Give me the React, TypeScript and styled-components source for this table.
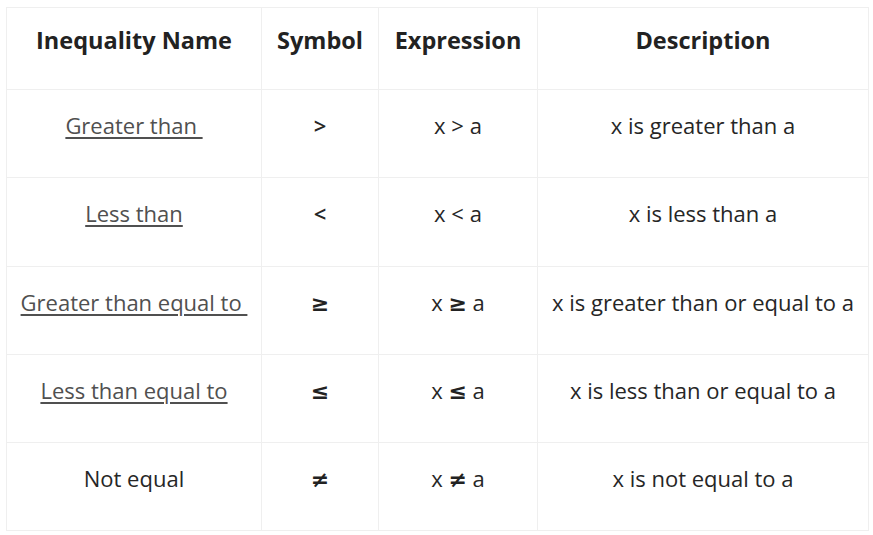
import React from "react";
import styled, { createGlobalStyle } from "styled-components";

const Global = createGlobalStyle`
  html, body { margin: 0; padding: 0; background: #ffffff; }
  body { font-family: "Open Sans", "Noto Sans", sans-serif; }
`;

const Page = styled.div`
  padding: 7px 0 0 6px;
`;

const Table = styled.table`
  border-collapse: collapse;
  width: 862px;
  table-layout: fixed;
  font-family: "Open Sans", "Noto Sans", sans-serif;
`;

const HeadCell = styled.th<{ $w: number }>`
  width: ${(p) => p.$w}px;
  height: 82px;
  box-sizing: border-box;
  border: 1px solid #efefef;
  padding: 18px 0 0;
  vertical-align: top;
  text-align: center;
  font-size: 23.5px;
  line-height: 28px;
  font-weight: 700;
  color: #222222;
  white-space: nowrap;
`;

const Cell = styled.td<{ $bold?: boolean }>`
  height: 88.3px;
  box-sizing: border-box;
  border: 1px solid #efefef;
  padding: 21px 0 0;
  vertical-align: top;
  text-align: center;
  font-size: 22px;
  line-height: 28px;
  font-weight: ${(p) => (p.$bold ? 600 : 400)};
  color: #262626;
  white-space: nowrap;
`;

const Link = styled.a`
  color: #505050;
  text-decoration: underline;
  text-decoration-thickness: 2px;
  text-underline-offset: 3px;
  white-space: pre;
`;

const MathSym = styled.span`
  font-family: "DejaVu Sans", sans-serif;
  font-weight: 700;
  font-size: 22px;
  line-height: 0;
  color: #222222;
`;

type Row = { name: string; link: boolean; sym: string; desc: string };

const rows: Row[] = [
  { name: "Greater than ", link: true, sym: ">", desc: "x is greater than a" },
  { name: "Less than", link: true, sym: "<", desc: "x is less than a" },
  { name: "Greater than equal to ", link: true, sym: "≥", desc: "x is greater than or equal to a" },
  { name: "Less than equal to", link: true, sym: "≤", desc: "x is less than or equal to a" },
  { name: "Not equal", link: false, sym: "≠", desc: "x is not equal to a" },
];

export default function App() {
  const plainSym = (s: string) => s === ">" || s === "<";
  return (
    <Page>
      <Global />
      <Table>
        <thead>
          <tr>
            <HeadCell $w={255}>Inequality Name</HeadCell>
            <HeadCell $w={117}>Symbol</HeadCell>
            <HeadCell $w={159}>Expression</HeadCell>
            <HeadCell $w={331}>Description</HeadCell>
          </tr>
        </thead>
        <tbody>
          {rows.map((r) => (
            <tr key={r.name}>
              <Cell>{r.link ? <Link href="#">{r.name}</Link> : r.name}</Cell>
              <Cell $bold>{plainSym(r.sym) ? r.sym : <MathSym>{r.sym}</MathSym>}</Cell>
              <Cell>
                x {plainSym(r.sym) ? r.sym : <MathSym>{r.sym}</MathSym>} a
              </Cell>
              <Cell>{r.desc}</Cell>
            </tr>
          ))}
        </tbody>
      </Table>
    </Page>
  );
}
